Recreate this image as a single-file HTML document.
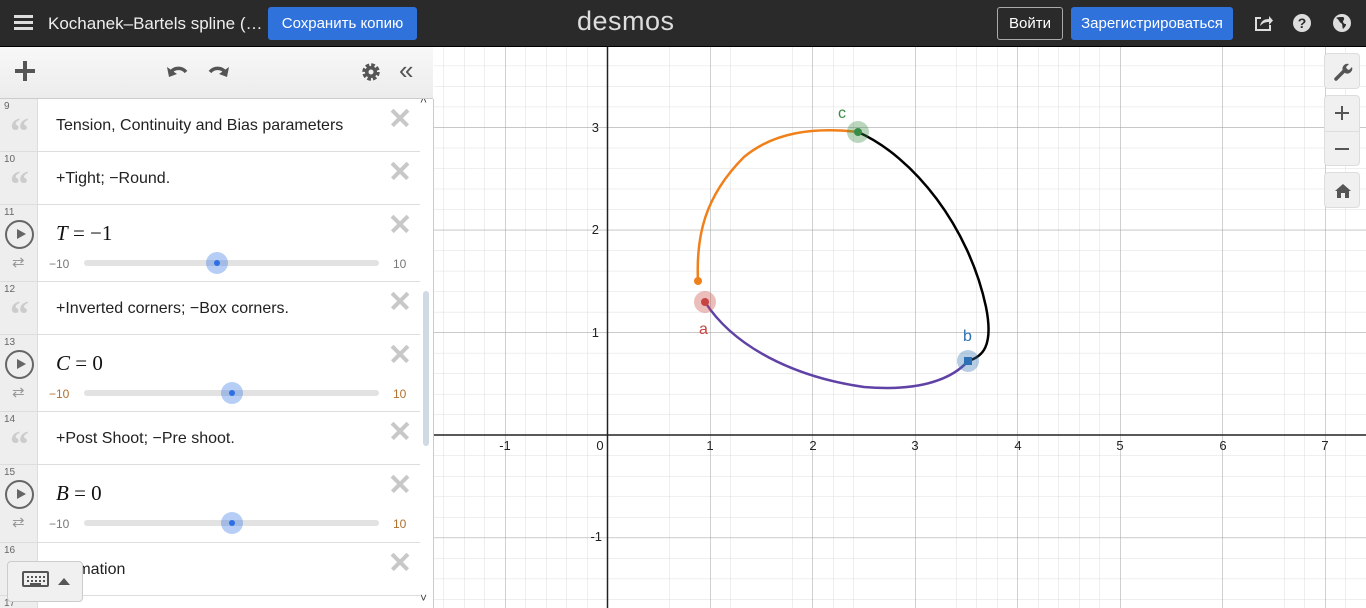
<!DOCTYPE html>
<html><head><meta charset="utf-8"><style>
*{box-sizing:border-box;margin:0;padding:0}
body{width:1366px;height:608px;overflow:hidden;font-family:"Liberation Sans",sans-serif;background:#fff;position:relative}
.hdr{position:absolute;left:0;top:0;width:1366px;height:47px;background:#2a2a2a;border-bottom:1px solid #000}
.hdr .t{position:absolute;left:48px;top:14px;color:#eee;font-size:17px}
.btn{position:absolute;top:7px;height:33px;border-radius:3px;color:#fff;font-size:15px;line-height:33px;text-align:center}
.logo{position:absolute;left:577px;top:6px;color:#ddd;font-size:27px;letter-spacing:0.5px}
.tb{position:absolute;left:0;top:47px;width:433px;height:52px;background:linear-gradient(#f8f8f8,#ececec);border-bottom:1px solid #ccc}
.panel{position:absolute;left:0;top:99px;width:434px;height:509px;border-right:1px solid #ccc;background:#fff;overflow:hidden}
.row{position:absolute;left:0;width:420px;border-bottom:1px solid #ddd}
.g{position:absolute;left:0;top:0;width:38px;height:100%;background:#eee;border-right:1px solid #ddd}
.n{position:absolute;left:4px;top:2px;font-size:10px;color:#666}
.q{position:absolute;left:10px;font-size:38px;color:#ccc;font-family:"Liberation Serif",serif;font-weight:bold;line-height:38px}
.txt{position:absolute;left:56px;font-size:16px;color:#222}
.x{position:absolute;left:391px;width:18px;height:18px}
.x:before,.x:after{content:"";position:absolute;left:-2px;top:7px;width:22px;height:3.5px;background:#c8c8c8;transform:rotate(45deg)}
.x:after{transform:rotate(-45deg)}
.m{position:absolute;left:56px;font-family:"Liberation Serif",serif;font-size:21px;color:#111}
.sl{position:absolute;left:84px;width:295px;height:6px;border-radius:3px;background:#e2e2e2}
.lo,.hi{position:absolute;font-size:12px;color:#777}
.play{position:absolute;left:5px;width:29px;height:29px;border:2px solid #666;border-radius:50%}
.play:after{content:"";position:absolute;left:10px;top:7px;border-left:9px solid #666;border-top:5.5px solid transparent;border-bottom:5.5px solid transparent}
.rp{position:absolute;left:12px;font-size:15px;color:#999}
.knob{position:absolute;width:22px;height:22px;border-radius:50%;background:rgba(45,112,230,.35)}
.knob:after{content:"";position:absolute;left:8px;top:8px;width:6px;height:6px;border-radius:50%;background:#2d70e6}
.zb{position:absolute;left:1324px;width:36px;background:#f0f0f0;border:1px solid #ddd;border-radius:4px}
</style></head><body>
<div class="hdr">
<div style="position:absolute;left:14px;top:15px;width:19px;height:3px;background:#ddd;box-shadow:0 6px 0 #ddd,0 12px 0 #ddd"></div>
<div class="t">Kochanek–Bartels spline (…</div>
<div class="btn" style="left:268px;width:149px;background:#2f72dc">Сохранить копию</div>
<div class="logo">desmos</div>
<div class="btn" style="left:997px;width:66px;border:1px solid #aaa;background:#2a2a2a;line-height:31px">Войти</div>
<div class="btn" style="left:1071px;width:162px;background:#2f72dc">Зарегистрироваться</div>
<svg style="position:absolute;left:1252px;top:12px" width="104" height="22" viewBox="0 0 104 22">
<path d="M3 5h6v2H5v10h12v-4h2v6H3z" fill="#ddd"/><path d="M8 14c1-5 4-7 9-7V4l4 4.5-4 4.5v-3c-4 0-6 1-9 4z" fill="#ddd"/>
<circle cx="50" cy="11" r="9" fill="#ddd"/><text x="50" y="16" text-anchor="middle" font-size="14" font-weight="bold" fill="#2a2a2a" font-family="Liberation Sans">?</text>
<circle cx="90" cy="11" r="9" fill="#ddd"/><path d="M84 6c3 1 3 4 5 5s1 4 2 6c2-2 3-3 3-5-2 0-3-1-3-3 1-1 2-3 0-4-3 0-5 0-7 1z" fill="#2a2a2a"/>
</svg>
</div>
<div class="tb">
<div style="position:absolute;left:15px;top:22px;width:20px;height:4px;background:#555"></div>
<div style="position:absolute;left:23px;top:14px;width:4px;height:20px;background:#555"></div>
<svg style="position:fixed;left:166px;top:61px" width="64" height="20" viewBox="0 0 64 20">
<path d="M4 12c4-6 12-6 16-1" stroke="#555" stroke-width="3.5" fill="none"/><path d="M1 6l2 10 8-3z" fill="#555"/>
<path d="M60 12c-4-6-12-6-16-1" stroke="#555" stroke-width="3.5" fill="none"/><path d="M63 6l-2 10-8-3z" fill="#555"/>
</svg>
<svg style="position:fixed;left:360px;top:61px" width="22" height="22" viewBox="0 0 22 22"><circle cx="11" cy="11" r="6.5" fill="none" stroke="#555" stroke-width="4.5" stroke-dasharray="3.3 1.8"/><circle cx="11" cy="11" r="6" fill="#555"/><circle cx="11" cy="11" r="2.5" fill="#f0f0f0"/></svg>
<div style="position:absolute;left:399px;top:8px;font-size:26px;color:#555">«</div>
</div>
<div class="panel">
<div class="row" style="top:0;height:53px"><div class="g"><span class="n">9</span><span class="q" style="top:14px">“</span></div><div class="txt" style="top:18px">Tension, Continuity and Bias parameters</div><div class="x" style="top:10px"></div></div>
<div class="row" style="top:53px;height:53px"><div class="g"><span class="n">10</span><span class="q" style="top:14px">“</span></div><div class="txt" style="top:18px">+Tight; −Round.</div><div class="x" style="top:10px"></div></div>
<div class="row" style="top:106px;height:77px"><div class="g"><span class="n">11</span><div class="play" style="top:15px"></div><span class="rp" style="top:48px">⇄</span></div><div class="m" style="top:16px"><i>T</i> = −1</div><div class="lo" style="left:49px;top:52px">−10</div><div class="sl" style="top:55px"></div><div class="knob" style="left:206px;top:47px"></div><div class="hi" style="left:393px;top:52px">10</div><div class="x" style="top:10px"></div></div>
<div class="row" style="top:183px;height:53px"><div class="g"><span class="n">12</span><span class="q" style="top:14px">“</span></div><div class="txt" style="top:18px">+Inverted corners; −Box corners.</div><div class="x" style="top:10px"></div></div>
<div class="row" style="top:236px;height:77px"><div class="g"><span class="n">13</span><div class="play" style="top:15px"></div><span class="rp" style="top:48px">⇄</span></div><div class="m" style="top:16px"><i>C</i> = 0</div><div class="lo" style="left:49px;top:52px;color:#b07030">−10</div><div class="sl" style="top:55px"></div><div class="knob" style="left:221px;top:47px"></div><div class="hi" style="left:393px;top:52px;color:#b07030">10</div><div class="x" style="top:10px"></div></div>
<div class="row" style="top:313px;height:53px"><div class="g"><span class="n">14</span><span class="q" style="top:14px">“</span></div><div class="txt" style="top:18px">+Post Shoot; −Pre shoot.</div><div class="x" style="top:10px"></div></div>
<div class="row" style="top:366px;height:78px"><div class="g"><span class="n">15</span><div class="play" style="top:15px"></div><span class="rp" style="top:48px">⇄</span></div><div class="m" style="top:16px"><i>B</i> = 0</div><div class="lo" style="left:49px;top:52px">−10</div><div class="sl" style="top:55px"></div><div class="knob" style="left:221px;top:47px"></div><div class="hi" style="left:393px;top:52px;color:#b07030">10</div><div class="x" style="top:10px"></div></div>
<div class="row" style="top:444px;height:53px"><div class="g"><span class="n">16</span></div><div class="txt" style="top:18px">animation</div><div class="x" style="top:10px"></div></div>
<div class="row" style="top:497px;height:30px"><div class="g"><span class="n">17</span></div></div>
<div style="position:absolute;left:423px;top:192px;width:6px;height:155px;border-radius:3px;background:#d0dae4"></div>
<div style="position:absolute;left:420px;top:-6px;font-size:12px;color:#444">˄</div>
<div style="position:absolute;left:420px;top:492px;font-size:12px;color:#444">˅</div>
<div style="position:absolute;left:7px;top:462px;width:76px;height:41px;background:#f0f0f0;border:1px solid #ccc;border-radius:4px">
<div style="position:absolute;left:14px;top:9px;width:27px;height:16px;border:2px solid #555;border-radius:2px;background:repeating-linear-gradient(90deg,#555 0 2px,transparent 2px 4px) 3px 3px/19px 2px no-repeat,repeating-linear-gradient(90deg,#555 0 2px,transparent 2px 4px) 3px 7px/19px 2px no-repeat,linear-gradient(#555,#555) 6px 10px/11px 2px no-repeat"></div>
<div style="position:absolute;left:50px;top:16px;border-bottom:7px solid #555;border-left:6px solid transparent;border-right:6px solid transparent"></div>
</div>
</div>
<svg style="position:absolute;left:434px;top:47px" width="932" height="561" viewBox="0 0 932 561">
<defs>
<pattern id="mi" patternUnits="userSpaceOnUse" x="173.5" y="388" width="20.5" height="20.52"><path d="M0 0V20.52M0 0H20.5" stroke="#dedede" stroke-width="1"/></pattern>
<pattern id="ma" patternUnits="userSpaceOnUse" x="173.5" y="388" width="102.5" height="102.6"><path d="M0 0V102.6M0 0H102.5" stroke="#a0a0a0" stroke-width="1"/></pattern>
</defs>
<rect width="932" height="561" fill="url(#mi)"/>
<rect width="932" height="561" fill="url(#ma)"/>
<path d="M173.5 0V561M0 388H932" stroke="#222" stroke-width="1.5"/>
<g font-family="Liberation Sans" font-size="13" fill="#222" text-anchor="middle">
<text x="71" y="403">-1</text><text x="166" y="403">0</text><text x="276" y="403">1</text><text x="379" y="403">2</text><text x="481" y="403">3</text><text x="584" y="403">4</text><text x="686" y="403">5</text><text x="789" y="403">6</text><text x="891" y="403">7</text>
<text x="165" y="290" text-anchor="end">1</text><text x="165" y="187" text-anchor="end">2</text><text x="165" y="85" text-anchor="end">3</text><text x="168" y="494" text-anchor="end">-1</text>
</g>
<path d="M264 234C262 190 270 150 310 110C340 85 380 80 424 85" stroke="#f0801a" stroke-width="2.5" fill="none"/>
<path d="M424 85C480 110 535 180 552 260C560 300 548 310 534 314" stroke="#000" stroke-width="2.5" fill="none"/>
<path d="M271 255C300 300 360 330 430 340C490 345 520 330 534 314" stroke="#6042a6" stroke-width="2.5" fill="none"/>
<circle cx="264" cy="234" r="4" fill="#f0801a"/>
<circle cx="271" cy="255" r="11" fill="rgba(199,68,64,.35)"/><circle cx="271" cy="255" r="4" fill="#c74440"/>
<circle cx="424" cy="85" r="11" fill="rgba(56,140,70,.35)"/><circle cx="424" cy="85" r="4" fill="#388c46"/>
<circle cx="534" cy="314" r="11" fill="rgba(45,112,179,.35)"/><rect x="530" y="310" width="8" height="8" fill="#2d70b3"/>
<g font-family="Liberation Sans" font-size="16"><text x="265" y="287" fill="#c74440">a</text><text x="529" y="294" fill="#2d70b3">b</text><text x="404" y="71" fill="#388c46">c</text></g>
</svg>
<div class="zb" style="top:53px;height:36px"><svg style="margin:8px" width="20" height="20" viewBox="0 0 20 20"><path d="M3 17l8-8" stroke="#555" stroke-width="3.5" stroke-linecap="round"/><path d="M10 9a5 5 0 0 1 6-7l-3 3 1 2 2 1 3-3a5 5 0 0 1-7 6z" fill="#555"/></svg></div>
<div class="zb" style="top:95px;height:71px"><div style="position:absolute;left:10px;top:16px;width:14px;height:2px;background:#555"></div><div style="position:absolute;left:16px;top:10px;width:2px;height:14px;background:#555"></div><div style="position:absolute;left:0;top:35px;width:34px;height:1px;background:#ddd"></div><div style="position:absolute;left:10px;top:52px;width:14px;height:2px;background:#555"></div></div>
<div class="zb" style="top:172px;height:36px"><svg style="margin:8px" width="20" height="20" viewBox="0 0 20 20"><path d="M10 3L2 10h2v7h4v-5h4v5h4v-7h2z" fill="#555"/></svg></div>
</body></html>
